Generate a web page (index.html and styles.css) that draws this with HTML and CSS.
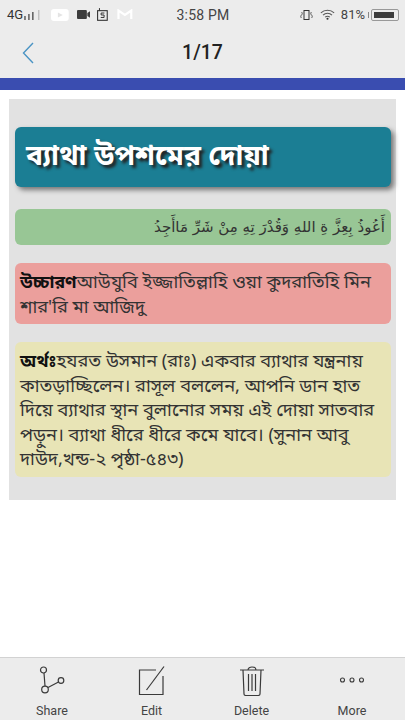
FILE: index.html
```html
<!DOCTYPE html>
<html lang="bn">
<head>
<meta charset="utf-8">
<title>ব্যাথা উপশমের দোয়া</title>
<link rel="stylesheet" href="styles.css">
</head>
<body>
<div class="app">
  <header class="top">
    <div class="status">
      <div class="status-left">
        <span class="net">4G</span>
        <svg class="sig" width="18" height="10" viewBox="0 0 18 10"><path d="M1 6v4M5 4v6M9 2v8" stroke="#444" stroke-width="1.3"/><path d="M15 0v10" stroke="#bbb" stroke-width="1.3"/></svg>
        <svg class="ic-yt" width="18" height="12" viewBox="0 0 18 12"><rect width="18" height="12" rx="3" fill="#fff"/><path d="M7 3.500l5 2.500-5 2.500z" fill="#e4e4e4"/></svg>
        <svg class="ic-cam" width="14" height="9" viewBox="0 0 14 9"><rect width="10" height="9" rx="1" fill="#3c3c3c"/><path d="M10.500 3l3-2v7l-3-2z" fill="#3c3c3c"/></svg>
        <svg class="ic-s" width="11" height="13" viewBox="0 0 11 13"><rect x=".6" y="2.600" width="9.800" height="9.800" fill="none" stroke="#333" stroke-width="1.100"/><path d="M2.500 0v3" stroke="#333"/><path d="M7.500 5H4.200v2h3v2.500H3.800" fill="none" stroke="#333"/></svg>
        <svg class="ic-m" width="16" height="11" viewBox="0 0 16 11"><path d="M1.500 10V1.500L8 6l6.500-4.500V10" fill="none" stroke="#fff" stroke-width="2.200"/></svg>
      </div>
      <span class="clock">3:58 PM</span>
      <div class="status-right">
        <svg class="ic-vib" width="13" height="10" viewBox="0 0 13 10"><rect x="4" y=".5" width="5" height="9" fill="none" stroke="#333"/><path d="M1.500 2c1 1 1 2 0 3s-1 2 0 3M11.500 2c-1 1-1 2 0 3s1 2 0 3" fill="none" stroke="#555"/></svg>
        <svg class="wifi" width="15" height="11" viewBox="0 0 14 10"><path d="M.8 3.500c3.500-3.200 8.900-3.200 12.400 0M2.800 5.500c2.400-2.200 6-2.200 8.400 0M4.800 7.500c1.300-1.100 3.100-1.100 4.400 0" fill="none" stroke="#555" stroke-width="1"/><circle cx="7" cy="9" r="1" fill="#333"/></svg>
        <span class="pct">81%</span>
        <span class="batt-tip"></span>
        <span class="batt"><span class="batt-fill"></span></span>
      </div>
    </div>
    <div class="nav">
      <svg class="back" width="12" height="22" viewBox="0 0 12 22"><path d="M11 1L1.500 11 11 21" fill="none" stroke="#4a94c4" stroke-width="1.400"/></svg>
      <h1 class="page-count">1/17</h1>
    </div>
  </header>
  <div class="rule"></div>
  <main class="panel">
    <h2 class="title">ব্যাথা উপশমের দোয়া</h2>
    <p class="box arabic" dir="rtl" lang="ar">أَعُوذُ بِعِزَّ ةِ اللهِ وَقُدْرَ تِهِ مِنْ شَرِّ مَاأَجِدُ</p>
    <p class="box red"><b>উচ্চারণ</b>আউযুবি ইজ্জাতিল্লাহি ওয়া কুদরাতিহি মিন শার'রি মা আজিদু</p>
    <p class="box yellow"><b>অর্থঃ</b>হযরত উসমান (রাঃ) একবার ব্যাথার যন্ত্রনায় কাতড়াচ্ছিলেন। রাসূল বললেন, আপনি ডান হাত দিয়ে ব্যাথার স্থান বুলানোর সময় এই দোয়া সাতবার পড়ুন। ব্যাথা ধীরে ধীরে কমে যাবে। (সুনান আবু দাউদ,খন্ড-২ পৃষ্ঠা-৫৪৩)</p>
  </main>
  <nav class="bottom">
    <div class="tool">
      <svg width="28" height="30" viewBox="0 0 28 30"><g fill="none" stroke="#3a3a3a" stroke-width="1.200"><circle cx="5.500" cy="4" r="3"/><circle cx="7" cy="23.500" r="3.300"/><circle cx="23" cy="14.500" r="2.800"/><path d="M6 7l1 13M10 21.500l10.500-5.500"/></g></svg>
      <span>Share</span>
    </div>
    <div class="tool">
      <svg width="28" height="30" viewBox="0 0 28 30"><g fill="none" stroke="#3a3a3a" stroke-width="1.200"><path d="M18 4H1.500v24.500h23.500V10"/><path d="M8.500 24L26 .5"/></g></svg>
      <span>Edit</span>
    </div>
    <div class="tool">
      <svg width="26" height="30" viewBox="0 0 26 30"><g fill="none" stroke="#3a3a3a" stroke-width="1.200"><path d="M1 4h24M9 4c0-4 8-4 8 0M4 4l1 24c0 1 1 1.500 2 1.500h12c1 0 2-.5 2-1.500l1-24M9.500 8v17M13 8v17M16.500 8v17"/></g></svg>
      <span>Delete</span>
    </div>
    <div class="tool">
      <svg width="26" height="30" viewBox="0 0 26 30"><g fill="none" stroke="#3a3a3a" stroke-width="1.100"><circle cx="3.500" cy="14" r="2"/><circle cx="13" cy="14" r="2"/><circle cx="22.500" cy="14" r="2"/></g></svg>
      <span>More</span>
    </div>
  </nav>
</div>
</body>
</html>
```
FILE: styles.css
```css
* { box-sizing: border-box; }
html, body { margin: 0; padding: 0; }
body {
  width: 405px;
  height: 720px;
  overflow: hidden;
  background: #fff;
  font-family: "Noto Sans", "Noto Sans Bengali", "Lohit Bengali", "Liberation Sans", "DejaVu Sans", sans-serif;
}
.app { display: flex; flex-direction: column; height: 720px; }
.top { background: #ececec; height: 78px; }
.status {
  height: 27px;
  padding: 2px 6px 0 7px;
  display: flex;
  align-items: center;
  justify-content: space-between;
  color: #444;
  font-family: Roboto, sans-serif;
  font-size: 13px;
}
.status-left, .status-right { display: flex; align-items: center; width: 126px; }
.status-right { justify-content: flex-end; gap: 4px; }
.net { font-size: 13px; color: #333; }
.sig { margin-left: 1px; }
.ic-yt { margin-left: 9px; }
.ic-cam { margin-left: 8px; }
.ic-s { margin-left: 7px; }
.ic-m { margin-left: 9px; }
.ic-vib { margin-right: 3px; }
.wifi { margin-right: 2px; }
.clock { font-size: 14px; letter-spacing: .2px; color: #444; }
.pct { font-size: 13px; color: #444; }
.batt-tip { width: 1px; height: 6px; margin-left: -1px; background: #888; }
.batt {
  display: block;
  width: 28px;
  height: 12px;
  margin-left: -2px;
  padding: 2px;
  border: 1px solid #999;
  border-radius: 2px;
}
.batt-fill { display: block; height: 100%; width: 90%; background: #3c3c3c; }
.nav {
  position: relative;
  height: 51px;
  display: flex;
  align-items: center;
  justify-content: center;
}
.back { position: absolute; left: 22px; top: 15px; }
.page-count { margin: 0 0 1px; font: 500 19.500px Roboto, sans-serif; color: #222; }
.rule { height: 12px; background: #3a4db0; }
.panel {
  margin: 9px 9px 0;
  width: 387px;
  height: 401px;
  padding: 28px 5px 0 6px;
  background: #e2e2e2;
}
.title {
  margin: 0 0 22px;
  height: 60px;
  padding: 0 11px 3px;
  display: flex;
  align-items: center;
  background: #1b7e94;
  border-radius: 6px;
  box-shadow: 3px 3px 5px #777;
  color: #fff;
  font-size: 28.200px;
  font-weight: 700;
  text-shadow: 3px 3px 3px #222;
}
.box {
  margin: 0 0 18px;
  padding: 8px 5px;
  border-radius: 6px;
  color: #333;
  font-size: 18.200px;
  line-height: 24.500px;
}
.box b { font-size: 17.600px; font-weight: 700; color: #111; }
.arabic {
  height: 36px;
  padding: 5px 6px;
  background: #98c695;
  font-family: "DejaVu Sans", sans-serif;
  font-size: 15px;
  line-height: 26px;
}
.red { height: 61px; padding-top: 6px; background: #eb9f9c; }
.yellow { height: 135px; padding-top: 6px; background: #e8e4b6; }
.bottom {
  margin-top: auto;
  height: 63px;
  display: grid;
  grid-template-columns: 104px 95px 105px 96px;
  background: #ececec;
  border-top: 1px solid #d2d2d2;
}
.tool {
  display: flex;
  flex-direction: column;
  align-items: center;
  color: #444;
  font: 12.500px Roboto, sans-serif;
  padding-top: 8px;
}
.tool span { margin-top: 7px; }
```
